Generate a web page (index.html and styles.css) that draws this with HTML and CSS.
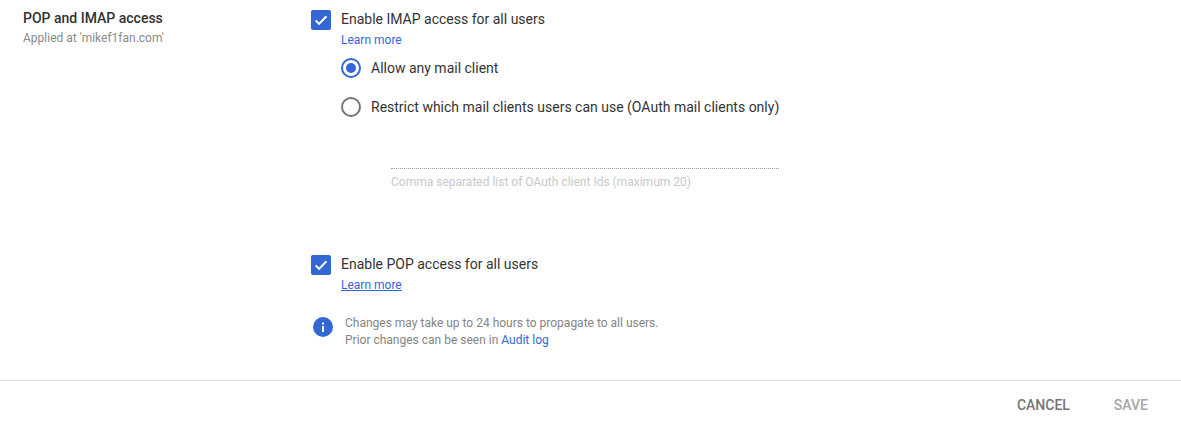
FILE: index.html
```html
<!DOCTYPE html>
<html lang="en">
<head>
    <meta charset="UTF-8">
    <meta name="viewport" content="width=device-width, initial-scale=1.0">
    <title>POP and IMAP access</title>
    <link rel="stylesheet" href="styles.css">
</head>
<body>

<div class="settings-row">
    <div class="setting-name">
        <div class="setting-title">POP and IMAP access</div>
        <div class="setting-scope">Applied at 'mikef1fan.com'</div>
    </div>

    <div class="setting-body">
        <div class="check-row">
            <svg class="checkbox" width="20" height="20" viewBox="0 0 20 20"><rect width="20" height="20" rx="2" fill="#3367d6"/><path d="M4.6 10.4l3.5 3.5 7.3-7.6" fill="none" stroke="#fff" stroke-width="2"/></svg>
            <div class="check-text">
                <div class="check-label">Enable IMAP access for all users</div>
                <a class="learn-more">Learn more</a>
            </div>
        </div>

        <div class="radio-row first">
            <svg class="radio" width="20" height="20" viewBox="0 0 20 20"><circle cx="10" cy="10" r="9" fill="none" stroke="#3367d6" stroke-width="2"/><circle cx="10" cy="10" r="5" fill="#3367d6"/></svg>
            <span class="radio-label">Allow any mail client</span>
        </div>
        <div class="radio-row">
            <svg class="radio" width="20" height="20" viewBox="0 0 20 20"><circle cx="10" cy="10" r="9" fill="none" stroke="#757575" stroke-width="2"/></svg>
            <span class="radio-label">Restrict which mail clients users can use (OAuth mail clients only)</span>
        </div>

        <div class="client-ids">
            <div class="dotted-line"></div>
            <div class="hint">Comma separated list of OAuth client Ids (maximum 20)</div>
        </div>

        <div class="check-row pop">
            <svg class="checkbox" width="20" height="20" viewBox="0 0 20 20"><rect width="20" height="20" rx="2" fill="#3367d6"/><path d="M4.6 10.4l3.5 3.5 7.3-7.6" fill="none" stroke="#fff" stroke-width="2"/></svg>
            <div class="check-text">
                <div class="check-label">Enable POP access for all users</div>
                <a class="learn-more underlined">Learn more</a>
            </div>
        </div>

        <div class="info-row">
            <svg class="info-icon" width="20" height="20" viewBox="0 0 20 20"><circle cx="10" cy="10" r="10" fill="#3367d6"/><rect x="9" y="9" width="2" height="6" fill="#fff"/><rect x="9" y="5.5" width="2" height="2" fill="#fff"/></svg>
            <div class="info-text">
                <div>Changes may take up to 24 hours to propagate to all users.</div>
                <div>Prior changes can be seen in <a class="audit-link">Audit log</a></div>
            </div>
        </div>
    </div>
</div>

<div class="footer">
    <span class="footer-button cancel">CANCEL</span>
    <span class="footer-button save">SAVE</span>
</div>

</body>
</html>
```

FILE: styles.css
```css
* {
    margin: 0;
    padding: 0;
    box-sizing: border-box;
}

body {
    font-family: 'Roboto', sans-serif;
    background: #fff;
    color: #333;
    height: 429px;
    overflow: hidden;
}

.settings-row {
    display: flex;
    height: 380px;
    padding-top: 10px;
}

.setting-name {
    width: 311px;
    padding-left: 23px;
}

.setting-title {
    font-size: 14px;
    font-weight: 500;
    line-height: 16px;
}

.setting-scope {
    font-size: 12px;
    line-height: 14px;
    margin-top: 5px;
    color: #8a8a8a;
}

.setting-body {
    flex: 1;
}

.check-row {
    display: flex;
}

.checkbox {
    margin-right: 10px;
    flex-shrink: 0;
}

.check-label {
    font-size: 14px;
    line-height: 18px;
}

.learn-more {
    display: block;
    font-size: 12px;
    line-height: 14px;
    margin-top: 5px;
    color: #3367d6;
}

.underlined {
    text-decoration: underline;
}

.radio-row {
    display: flex;
    align-items: center;
    padding-left: 30px;
    margin-top: 19px;
}

.radio-row.first {
    margin-top: 11px;
}

.radio {
    margin-right: 10px;
}

.radio-label {
    font-size: 14px;
    line-height: 20px;
}

.client-ids {
    margin-left: 80px;
    margin-top: 51px;
    width: 388px;
}

.dotted-line {
    border-top: 1px dotted #9e9e9e;
}

.hint {
    font-size: 12px;
    line-height: 14px;
    margin-top: 6px;
    color: #c8c8c8;
}

.check-row.pop {
    margin-top: 66px;
}

.info-row {
    display: flex;
    align-items: flex-start;
    margin-top: 23px;
    padding-left: 2px;
}

.info-icon {
    margin-top: 2px;
    margin-right: 12px;
    flex-shrink: 0;
}

.info-text {
    font-size: 12px;
    line-height: 17px;
    color: #858585;
}

.audit-link {
    color: #3367d6;
}

.footer {
    display: flex;
    justify-content: flex-end;
    align-items: center;
    gap: 44px;
    height: 49px;
    padding-right: 33px;
    border-top: 1px solid #e0e0e0;
}

.footer-button {
    font-size: 14px;
    font-weight: 500;
}

.cancel {
    color: #757575;
}

.save {
    color: #a6a6a6;
}
```
